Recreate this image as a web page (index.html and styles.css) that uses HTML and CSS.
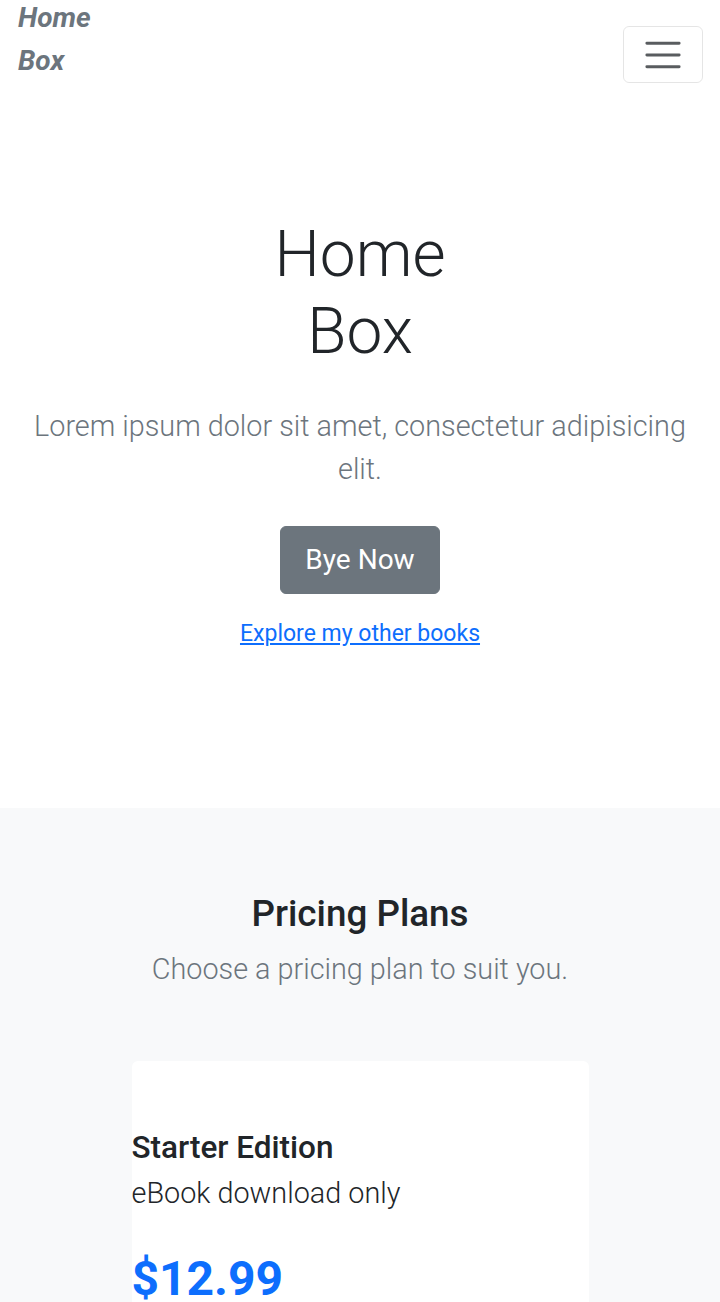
FILE: index.html
```html
<!DOCTYPE html>
<html lang="en">
<head>
<meta charset="utf-8">
<title>Home Box</title>
<link rel="stylesheet" href="styles.css">
</head>
<body>
<nav class="navbar">
  <a class="brand" href="#">Home Box</a>
  <button class="toggler" type="button" aria-label="Toggle navigation">
    <svg class="toggler-icon" viewBox="0 0 30 30" xmlns="http://www.w3.org/2000/svg"><path stroke="rgba(33,37,41,0.75)" stroke-linecap="round" stroke-miterlimit="10" stroke-width="2" d="M4 7h22M4 15h22M4 23h22"/></svg>
  </button>
</nav>

<section class="hero">
  <h1 class="hero-title">Home Box</h1>
  <p class="lead">Lorem ipsum dolor sit amet, consectetur adipisicing elit.</p>
  <a class="btn" href="#">Bye Now</a>
  <a class="explore" href="#">Explore my other books</a>
</section>

<section class="pricing">
  <h2 class="pricing-title">Pricing Plans</h2>
  <p class="pricing-sub">Choose a pricing plan to suit you.</p>
  <div class="card">
    <h3 class="plan-name">Starter Edition</h3>
    <p class="plan-desc">eBook download only</p>
    <div class="plan-price">$12.99</div>
  </div>
</section>
</body>
</html>
```
FILE: styles.css
```css
* { box-sizing: border-box; }
html, body { margin: 0; padding: 0; }
body {
  font-family: Roboto, "Noto Sans", sans-serif;
  color: #212529;
  background: #fff;
}
.navbar {
  display: flex;
  justify-content: space-between;
  align-items: flex-start;
  padding: 0 17px 0 18px;
  height: 84px;
}
.brand {
  display: block;
  width: min-content;
  margin-top: -4px;
  font-size: 28px;
  line-height: 43.3px;
  font-weight: 700;
  font-style: italic;
  color: #6c757d;
  text-decoration: none;
}
.toggler {
  margin-top: 26px;
  padding: 5.5px 17px;
  background: transparent;
  border: 1px solid rgba(0,0,0,0.1);
  border-radius: 6px;
  line-height: 0;
}
.toggler-icon { width: 44px; height: 44px; display: block; }

.hero {
  display: flex;
  flex-direction: column;
  align-items: center;
  text-align: center;
  padding: 132px 24px 157px;
}
.hero-title {
  width: min-content;
  margin: 0;
  font-size: 64px;
  font-weight: 300;
  line-height: 77.3px;
  color: #212529;
}
.lead {
  margin: 34.6px 0 0;
  font-size: 28.8px;
  font-weight: 300;
  line-height: 43.2px;
  color: #6c757d;
}
.btn {
  margin-top: 34.5px;
  display: inline-block;
  padding: 12px 24px;
  font-size: 28px;
  line-height: 42px;
  color: #fff;
  background: #6c757d;
  border: 1px solid #6c757d;
  border-radius: 6px;
  text-decoration: none;
}
.explore {
  margin-top: 22.5px;
  font-size: 23px;
  line-height: 34.5px;
  color: #0d6efd;
  text-decoration: underline;
}

.pricing {
  background: #f8f9fa;
  padding: 84px 0 40px;
  text-align: center;
}
.pricing-title {
  margin: 0;
  font-size: 36.8px;
  font-weight: 500;
  line-height: 44.2px;
  color: #212529;
}
.pricing-sub {
  margin: 11.4px 0 0;
  font-size: 28.8px;
  font-weight: 300;
  line-height: 43.2px;
  color: #6c757d;
}
.card {
  width: 457px;
  margin: 70px auto 0;
  padding: 68.3px 0 30px;
  background: #fff;
  border-radius: 6px;
  text-align: left;
}
.plan-name {
  margin: 0;
  font-size: 31.5px;
  font-weight: 500;
  line-height: 37.8px;
  color: #212529;
}
.plan-desc {
  margin: 4.8px 0 0;
  font-size: 28.8px;
  font-weight: 300;
  line-height: 43.2px;
  color: #212529;
}
.plan-price {
  margin-top: 34.7px;
  font-size: 48px;
  font-weight: 700;
  line-height: 57.6px;
  color: #0d6efd;
}
```
